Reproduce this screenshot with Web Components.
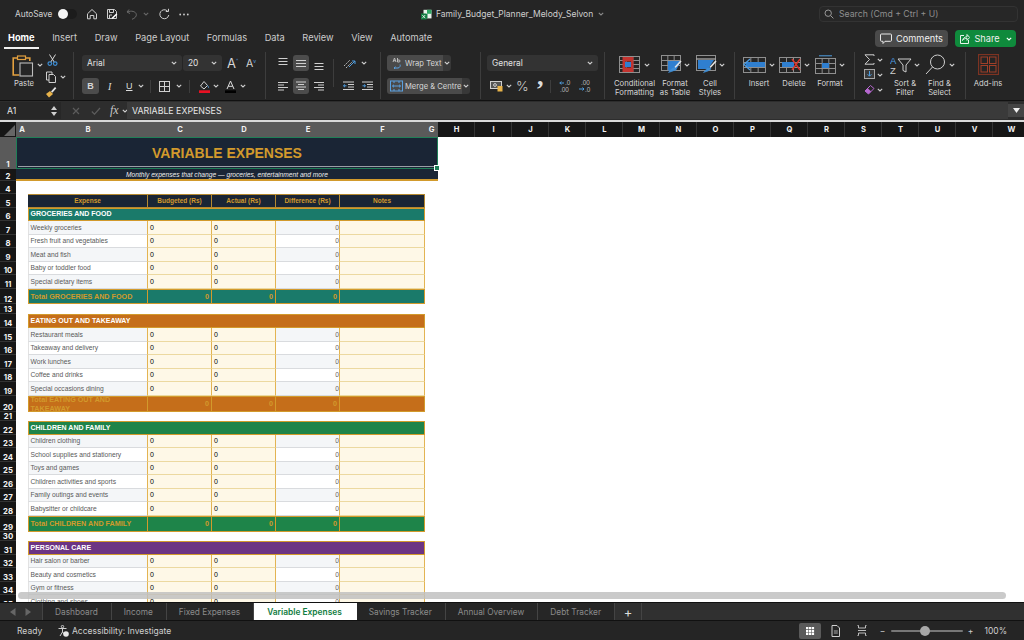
<!DOCTYPE html>
<html>
<head>
<meta charset="utf-8">
<title>Family Budget Planner</title>
<style>
  html, body { margin: 0; padding: 0; height: 100%; overflow: hidden; background: #262626; }
  body { display: flex; flex-direction: column; width: 1024px; height: 640px; font-family: Inter, "Liberation Sans", sans-serif; }
</style>
</head>
<body>
<budget-titlebar></budget-titlebar>
<budget-menubar></budget-menubar>
<budget-ribbon></budget-ribbon>
<budget-formula></budget-formula>
<budget-sheet></budget-sheet>
<budget-tabs></budget-tabs>
<budget-status></budget-status>

<script>
// small svg helper, everything is drawn on a px-for-px viewBox
const svg = (w, h, inner, extra = '') =>
  `<svg width="${w}" height="${h}" viewBox="0 0 ${w} ${h}" fill="none" stroke="#cfcfcf" stroke-width="1" style="display:block;flex:none;${extra}">${inner}</svg>`;
const chev = (ml = 3, c = '#d0d0d0') =>
  svg(6, 4, `<path d="M.8 .8 3 3 5.2 .8" stroke="${c}" stroke-width="1.1"/>`, `margin-left:${ml}px;`);

class BudgetTitlebar extends HTMLElement {
  constructor() {
    super();
    this.attachShadow({ mode: 'open' });
    this.shadowRoot.innerHTML = `
      <style>
        :host { display: flex; align-items: center; height: 26px; flex: none; background: #252525; color: #d2d2d2; font-size: 8.3px; padding-top: 2px; box-sizing: border-box; position: relative; }
        .auto { margin-left: 15px; width: 43px; }
        .toggle { width: 19px; height: 10px; border-radius: 5px; background: #1c1c1c; position: relative; margin-right: 9px; }
        .toggle i { position: absolute; left: 0; top: 0; width: 10px; height: 10px; border-radius: 50%; background: #f4f4f4; }
        .icons { display: flex; align-items: center; gap: 8px; }
        .name { display: flex; align-items: center; gap: 4px; margin-left: 232px; font-size: 8.5px; width: 398px; color: #cfcfcf; }
        .search { display: flex; align-items: center; gap: 5px; width: 199px; height: 16px; box-sizing: border-box; border: 1px solid #333; border-radius: 4px; padding-left: 4px; color: #8f8f8f; font-size: 8.7px; background: #272727; }
      </style>
      <div class="auto">AutoSave</div>
      <div class="toggle"><i></i></div>
      <div class="icons">
        ${svg(12, 12, '<path d="M1.5 5.8 6 1.5l4.5 4.3v5H7.8V7.5H4.2v3.3H1.5z" stroke-linejoin="round"/>')}
        ${svg(12, 12, '<path d="M1.5 1.5h7l2 2v7h-9z" stroke-linejoin="round"/><path d="M3.5 1.5v3h4v-3M3.5 10.5V7h2.5"/><path d="M6 10.5 10.8 6" stroke="#fff" stroke-width="1.6"/>')}
        ${svg(12, 12, '<path d="M3 1.5 1 4l3 1.5M1.3 4c4-1.8 8.5-.5 9 2.3.4 2.2-1.6 4-4.3 5" stroke="#6a6a6a"/>', 'margin-right:-3px')}
        ${chev(0, '#666')}
        ${svg(12, 12, '<path d="M9.5 3A4.5 4.5 0 1 0 10.8 7"/><path d="M10.5 .8V3.5H7.8" />', 'margin-left:1px')}
        ${svg(10, 3, '<circle cx="1.2" cy="1.5" r=".9" fill="#cfcfcf" stroke="none"/><circle cx="5" cy="1.5" r=".9" fill="#cfcfcf" stroke="none"/><circle cx="8.8" cy="1.5" r=".9" fill="#cfcfcf" stroke="none"/>', 'margin-left:1px')}
      </div>
      <div class="name">
        ${svg(11, 11, '<rect x="2.5" y=".8" width="8" height="8.6" fill="#e8f3ec" stroke="none"/><rect x="6" y=".8" width="4.5" height="4" fill="#2fa866" stroke="none"/><rect x="2.5" y="5" width="4" height="4.4" fill="#1f7a4c" stroke="none"/><rect x="0" y="4.5" width="5.6" height="6" fill="#107c41" stroke="none"/><path d="M1.3 6 4.2 9.2M4.2 6 1.3 9.2" stroke="#fff" stroke-width=".8"/>')}
        <span>Family_Budget_Planner_Melody_Selvon</span>
        ${chev(1, '#8a8a8a')}
      </div>
      <div class="search">
        ${svg(10, 10, '<circle cx="4.2" cy="4.2" r="3.2" stroke="#999"/><path d="M6.6 6.6 9.4 9.4" stroke="#999"/>')}
        <span>Search (Cmd + Ctrl + U)</span>
      </div>`;
  }
}

class BudgetMenubar extends HTMLElement {
  constructor() {
    super();
    this.attachShadow({ mode: 'open' });
    const names = ['Home', 'Insert', 'Draw', 'Page Layout', 'Formulas', 'Data', 'Review', 'View', 'Automate'];
    this.shadowRoot.innerHTML = `
      <style>
        :host { display: flex; align-items: center; height: 22px; flex: none; background: #252525; color: #cdcdcd; font-size: 9.25px; box-sizing: border-box; padding-left: 8px; }
        .tab { position: relative; margin-right: 17.6px; white-space: nowrap; }
        .tab.on { color: #fff; font-weight: 700; }
        .tab.on::after { content: ""; position: absolute; left: -4px; right: -4px; bottom: -6px; height: 1.5px; background: #f0f0f0; }
        .end { margin-left: auto; display: flex; gap: 7px; margin-right: 8px; margin-top: 3px; }
        .btn { display: flex; align-items: center; justify-content: center; gap: 4px; height: 17px; border-radius: 4px; color: #f0f0f0; font-size: 9.2px; }
        .comments { width: 73px; background: #4a4a4a; }
        .share { width: 61px; background: #0f8a3c; }
      </style>
      ${names.map((n, i) => `<div class="tab ${i ? '' : 'on'}">${n}</div>`).join('')}
      <div class="end">
        <div class="btn comments">${svg(12, 11, '<path d="M1.5 1h9a1 1 0 0 1 1 1v5.3a1 1 0 0 1-1 1H5L3 10.5V8.3H1.5a1 1 0 0 1-1-1V2a1 1 0 0 1 1-1z" stroke="#e8e8e8"/>')}Comments</div>
        <div class="btn share">${svg(11, 11, '<path d="M5 2.5H1.5v8h8V7" stroke="#e8f5ec"/><path d="M3.5 7.5C4 5 6 3.8 8 3.8V1.5l2.7 3L8 7.3V5.3C6 5.3 4.8 6 3.5 7.5z" stroke="#e8f5ec"/>')}Share${chev(2, '#fff')}</div>
      </div>`;
  }
}

// one big ribbon command: icon + chevron above, one or two label lines below
class RibbonBig extends HTMLElement {
  constructor() {
    super();
    this.attachShadow({ mode: 'open' });
    this.shadowRoot.innerHTML = `
      <style>
        :host { display: flex; flex-direction: column; align-items: center; height: 47px; color: #d6d6d6; font-size: 7.7px; line-height: 9px; text-align: center; white-space: nowrap; }
        .top { height: 25px; display: flex; align-items: center; }
        .lab { margin-top: 2px; }
      </style>
      <div class="top"><slot name="icon"></slot></div>
      <div class="lab"><slot></slot></div>`;
  }
}

class BudgetRibbon extends HTMLElement {
  constructor() {
    super();
    this.attachShadow({ mode: 'open' });
    const G = '#8f8f8f';
    const grid = (x, y, w, h, cols, rows) => {
      let s = `<rect x="${x}" y="${y}" width="${w}" height="${h}" stroke="${G}"/>`;
      for (let i = 1; i < cols; i++) s += `<path d="M${x + i * w / cols} ${y}v${h}" stroke="${G}"/>`;
      for (let i = 1; i < rows; i++) s += `<path d="M${x} ${y + i * h / rows}h${w}" stroke="${G}"/>`;
      return s;
    };
    const brush = (tx, ty) => `<path d="M${tx} ${ty}l-6 6.5" stroke="#e6e6e6" stroke-width="1.6"/><path d="M${tx - 6} ${ty + 6.5}l-3 1-3.5 4 4.5-1.5 3-2z" fill="#3f8fd6" stroke="#3f8fd6" stroke-width=".6"/>`;
    const lines = (arr) => arr.map(([x, y, w]) => `<path d="M${x} ${y}h${w}"/>`).join('');
    this.shadowRoot.innerHTML = `
      <style>
        :host { display: flex; height: 53px; flex: none; background: #252525; color: #d6d6d6; font-size: 7.6px; box-sizing: border-box; padding-top: 4px; border-bottom: 1px solid #111; }
        .g { display: flex; height: 47px; box-sizing: border-box; border-right: 1px solid #3d3d3d; flex: none; }
        .col { display: flex; flex-direction: column; justify-content: space-between; padding: 3px 0 0; height: 39px; }
        .row { display: flex; align-items: center; height: 16px; }
        .sel { display: flex; align-items: center; justify-content: space-between; height: 16px; box-sizing: border-box; background: #333; border-radius: 3px; padding: 0 5px; color: #e2e2e2; font-size: 8.4px; }
        .hi { background: #4c4c4c; border-radius: 3px; display: flex; align-items: center; justify-content: center; height: 16px; }
        .split { display: flex; height: 16px; }
        .split .main { display: flex; align-items: center; background: #4a4a4a; border-radius: 3px 0 0 3px; white-space: nowrap; }
        .split .more { display: flex; align-items: center; justify-content: center; width: 8px; background: #383838; border-radius: 0 3px 3px 0; }
        .sep { width: 1px; height: 13px; background: #3d3d3d; flex: none; }
        .lbl { font-size: 7.7px; color: #d6d6d6; }
        .b { font-family: "Liberation Serif", serif; font-size: 10px; color: #ddd; }
      </style>

      <div class="g" style="width:74px;padding-left:12px">
        <div style="width:25px">
          ${svg(23, 23, '<path d="M6 3H1.2v17h6M13 3h4.8v3" stroke="#e2a03f" stroke-width="1.6"/><rect x="5.5" y="1" width="8" height="3.5" stroke="#e2a03f" stroke-width="1.2"/><rect x="8" y="8" width="12.5" height="13" stroke="#bdbdbd" stroke-width="1.1"/>', 'margin-top:3px')}
          <div class="lbl" style="margin:1px 0 0 0;width:24px;text-align:center">Paste</div>
        </div>
        <div style="margin-top:11px">${chev(0)}</div>
        <div style="display:flex;flex-direction:column;gap:3px;margin-left:2px;padding-top:2px">
          ${svg(11, 12, '<path d="M2.5 .5 7.2 8M8.5 .5 3.8 8" stroke="#d8d8d8"/><circle cx="2.8" cy="9.6" r="1.8" stroke="#3f8fd6" stroke-width="1.2"/><circle cx="8.2" cy="9.6" r="1.8" stroke="#3f8fd6" stroke-width="1.2"/>', 'margin-left:2px')}
          <div style="display:flex;align-items:center;margin-top:2px">${svg(12, 12, '<path d="M7 3V1H1.5v8H4" stroke="#cfcfcf"/><path d="M4 3.5h4.5l2 2v6H4z" stroke="#cfcfcf"/>')}${chev(3)}</div>
          ${svg(12, 12, '<path d="M6 5.5 10 1l1.3 1.2-4 4.5z" fill="#e6e6e6" stroke="none"/><path d="M5 5 1 8l3 3.5L8 8z" fill="#e8b34a" stroke="none"/>')}
        </div>
      </div>

      <div class="g" style="width:192px;padding-left:8px">
        <div class="col">
          <div class="row">
            <div class="sel" style="width:100px;margin-right:1px">Arial${chev(0)}</div>
            <div class="sel" style="width:39px">20${chev(0)}</div>
            <span style="font-size:13px;margin-left:5px;width:19px">A<sup style="font-size:5px;color:#5aa0e0;vertical-align:6px">^</sup></span>
            <span style="font-size:10.5px;width:14px">A<sup style="font-size:5px;color:#5aa0e0;vertical-align:4px">v</sup></span>
          </div>
          <div class="row">
            <div class="hi" style="width:17px;font-weight:700;font-family:'Liberation Sans',sans-serif;font-size:9px">B</div>
            <span class="b" style="font-style:italic;margin-left:9px;width:10px">I</span>
            <span class="b" style="text-decoration:underline;margin-left:8px;font-family:'Liberation Sans',sans-serif;font-size:9px">U</span>
            ${chev(5)}
            <div class="sep" style="margin:0 8px 0 6px"></div>
            ${svg(11, 11, '<rect x=".5" y=".5" width="10" height="10"/><path d="M5.5 .5v10M.5 5.5h10"/>')}
            ${chev(6)}
            <div class="sep" style="margin:0 9px 0 7px"></div>
            ${svg(11, 13, '<path d="M5 1.5 1.5 6l3.5 3 3.5-3.5z"/><path d="M8.5 5.5c1 1.2 1.3 2 .8 2.4" stroke="#5aa0e0"/><rect x="0" y="10.3" width="11" height="2.7" fill="#e81123" stroke="none"/>')}
            ${chev(3)}
            ${svg(11, 13, '<path d="M2 9 5.5 1 9 9M3.3 6.3h4.4" stroke="#ddd"/><rect x="0" y="10.3" width="11" height="2.7" fill="#000" stroke="none"/>', 'margin-left:6px')}
            ${chev(4)}
          </div>
        </div>
      </div>

      <div class="g" style="width:115px;padding-left:11px">
        <div class="col" style="width:49px">
          <div class="row" style="gap:4px">
            ${svg(12, 12, lines([[1.5, 2.5, 9], [1.5, 5.5, 9], [1.5, 8.5, 9]]), 'margin-top:-3px')}
            <div class="hi" style="width:16px">${svg(12, 9, lines([[1, 1.5, 10], [1, 4.5, 10], [1, 7.5, 10]]))}</div>
            ${svg(12, 12, lines([[1.5, 4.5, 9], [1.5, 7.5, 9], [1.5, 10.5, 9]]), 'margin-top:3px')}
          </div>
          <div class="row" style="gap:4px">
            ${svg(12, 12, lines([[1, 2.5, 10], [1, 5, 6], [1, 7.5, 10], [1, 10, 6]]))}
            <div class="hi" style="width:16px">${svg(12, 10, lines([[1, 1, 10], [3, 3.5, 6], [1, 6, 10], [3, 8.5, 6]]))}</div>
            ${svg(12, 12, lines([[1, 2.5, 10], [5, 5, 6], [1, 7.5, 10], [5, 10, 6]]))}
          </div>
        </div>
        <div class="sep" style="height:28px;margin:7px 9px 0 7px"></div>
        <div class="col">
          <div class="row">
            ${svg(13, 11, '<path d="M1 8 7 2M3 10l6-6" stroke="#b9b9b9" stroke-dasharray="2 1"/><path d="M6 9 12 3M12 3v3M12 3H9" stroke="#4e9de0"/>')}
            ${chev(5)}
          </div>
          <div class="row">
            ${svg(11, 10, lines([[0, 1, 11], [5, 3.5, 6], [5, 6, 6], [0, 8.5, 11]]) + '<path d="M3.5 4.8H.5M.5 4.8 2 3.4M.5 4.8 2 6.2" stroke="#4e9de0"/>')}
            ${svg(11, 10, lines([[0, 1, 11], [5, 3.5, 6], [5, 6, 6], [0, 8.5, 11]]) + '<path d="M.5 4.8h3M3.5 4.8 2 3.4M3.5 4.8 2 6.2" stroke="#4e9de0"/>', 'margin-left:8px')}
          </div>
        </div>
      </div>

      <div class="g" style="width:100px;padding-left:6px">
        <div class="col">
          <div class="split">
            <div class="main" style="width:56px">
              ${svg(13, 12, '<path d="M3 5 4.5 1l1.5 4M3.5 3.7h2" stroke="#bbb"/><path d="M7.5 1v4h1.5a1 1 0 0 0 0-2H7.5" stroke="#bbb"/><path d="M10 7.5a2.5 2.5 0 0 1-2 3.5H4M4 11l1.5-1.3M4 11l1.5 1.3" stroke="#5aa0e0"/>', 'margin-left:3px')}
              <span style="margin-left:2px">Wrap Text</span>
            </div>
            <div class="more">${chev(0)}</div>
          </div>
          <div class="split">
            <div class="main" style="width:75px">
              ${svg(13, 12, '<rect x=".5" y="1" width="12" height="10" stroke="#5aa0e0"/><path d="M4 1v2M4 9v2M9 1v2M9 9v2" stroke="#5aa0e0"/><path d="M2.5 6h8M2.5 6 4 4.7M2.5 6 4 7.3M10.5 6 9 4.7M10.5 6 9 7.3" stroke="#5aa0e0"/>', 'margin-left:3px')}
              <span style="margin-left:2px">Merge &amp; Centre</span>
            </div>
            <div class="more">${chev(0)}</div>
          </div>
        </div>
      </div>

      <div class="g" style="width:124px;padding-left:6px">
        <div class="col">
          <div class="sel" style="width:111px">General${chev(0)}</div>
          <div class="row" style="padding-left:3px">
            ${svg(13, 11, '<rect x=".5" y=".5" width="11" height="7" fill="#555" /><circle cx="5" cy="4" r="1.4"/><rect x="7.5" y="5" width="5" height="5.5" fill="#e8b34a" stroke="none"/>')}
            ${chev(3)}
            <span style="font-size:13.5px;margin-left:4px;width:16px;color:#ccc;font-weight:300">%</span>
            <span style="font-family:'Liberation Serif',serif;font-size:26px;margin-left:5px;width:11px;line-height:10px;height:10px;color:#ddd;font-weight:700;transform:translateY(-9px)">,</span>
            <div class="sep" style="margin:0 8px 0 2px"></div>
            ${svg(13, 12, '<path d="M5 3H0.8M.8 3 2.3 1.5M.8 3l1.5 1.5" stroke="#4e9de0"/><text x="6" y="5" font-size="6.4" fill="#bbb" stroke="none" font-family="Liberation Sans">.0</text><text x="1" y="11.5" font-size="6.4" fill="#bbb" stroke="none" font-family="Liberation Sans">.00</text>')}
            ${svg(13, 12, '<text x="3" y="5" font-size="6.4" fill="#bbb" stroke="none" font-family="Liberation Sans">.00</text><path d="M1 9h5M6 9 4.5 7.5M6 9l-1.5 1.5" stroke="#4e9de0"/><text x="7" y="11.5" font-size="6.4" fill="#bbb" stroke="none" font-family="Liberation Sans">.0</text>', 'margin-left:6px')}
          </div>
        </div>
      </div>

      <div class="g" style="width:130px;padding-left:8px">
        <ribbon-big style="width:43px">
          <div slot="icon" style="display:flex;align-items:center">${svg(21, 17, grid(.5, .5, 20, 16, 3, 4) + '<path d="M3.5 1h11v4.5h-11zM3.5 11.5h11V16h-11zM3.5 5.5H6v6H3.5zM12 5.5h2.5v6H12z" fill="#c2332f" stroke="none"/><rect x="6" y="6" width="6" height="5" fill="#2f7fd0" stroke="none"/>')}${chev(4)}</div>
          Conditional<br>Formatting
        </ribbon-big>
        <ribbon-big style="width:38px;margin-left:0">
          <div slot="icon" style="display:flex;align-items:center">${svg(21, 20, grid(.5, .5, 19, 15, 3, 3) + '<path d="M7 6h13L15 15.5H7z" fill="#2f7fd0" stroke="none"/>' + brush(20, 6))}${chev(2)}</div>
          Format<br>as Table
        </ribbon-big>
        <ribbon-big style="width:34px;margin-left:-1px">
          <div slot="icon" style="display:flex;align-items:center">${svg(21, 20, grid(.5, .5, 19, 15, 1, 1) + '<path d="M.5 4h19" stroke="${G}"/><path d="M2 5h16l-6 9H2z" fill="#2f7fd0" stroke="none"/>' + brush(20, 6))}${chev(2)}</div>
          Cell<br>Styles
        </ribbon-big>
      </div>

      <div class="g" style="width:120px;padding-left:8px">
        <ribbon-big style="width:32px;margin-left:0">
          <div slot="icon" style="display:flex;align-items:center">${svg(23, 16, grid(.5, .5, 22, 15, 3, 3) + '<rect x="3" y="5" width="19" height="5" fill="#2f7fd0" stroke="none"/><path d="M7 2 1 7.5 7 13" stroke="#4e9de0" stroke-width="1.3"/>')}${chev(3)}</div>
          Insert
        </ribbon-big>
        <ribbon-big style="width:36px;margin-left:1px">
          <div slot="icon" style="display:flex;align-items:center">${svg(22, 16, grid(.5, .5, 21, 15, 3, 3) + '<rect x="3" y="5" width="12" height="5" fill="#2f7fd0" stroke="none"/><path d="M13 2 21 13M21 2 13 13" stroke="#d9342b" stroke-width="1.4"/>')}${chev(3)}</div>
          Delete
        </ribbon-big>
        <ribbon-big style="width:34px;margin-left:1px">
          <div slot="icon" style="display:flex;align-items:center">${svg(21, 19, '<path d="M4 .8h13" stroke="#4e9de0"/>' + grid(.5, 3.5, 20, 15, 3, 3) + '<rect x="7" y="8" width="7" height="5" fill="#2f7fd0" stroke="none"/>')}${chev(3)}</div>
          Format
        </ribbon-big>
      </div>

      <div class="g" style="width:111px;padding-left:9px">
        <div style="display:flex;flex-direction:column;gap:4px;padding-top:2px;width:22px">
          <div style="display:flex;align-items:center">${svg(11, 11, '<path d="M10 2V.8H1l4.5 4.7L1 10.2h9V9"/>')}${chev(2)}</div>
          <div style="display:flex;align-items:center">${svg(11, 11, '<rect x=".5" y=".5" width="10" height="9" fill="#3a3a3a" stroke="#a8a8a8"/><path d="M5.5 2v5M3.5 5.2l2 2 2-2" stroke="#4e9de0"/>')}${chev(2)}</div>
          <div style="display:flex;align-items:center">${svg(11, 11, '<path d="M1 7 6.5 1.5 10 4.5 4.5 10z" stroke="#b768d0"/><path d="M3.8 4.3 7.2 7.6 4.5 10 1 7z" fill="#b768d0" stroke="none"/>')}${chev(2)}</div>
        </div>
        <ribbon-big style="width:36px;margin-left:1px">
          <div slot="icon" style="display:flex;align-items:center">${svg(22, 20, '<text x="0" y="9" font-size="9.5" fill="#4e9de0" stroke="none" font-family="Liberation Sans">A</text><text x="0" y="19" font-size="9.5" fill="#cfcfcf" stroke="none" font-family="Liberation Sans">Z</text><path d="M8 4h13l-5 6v7l-3-1.5V10z"/>')}${chev(2)}</div>
          Sort &amp;<br>Filter
        </ribbon-big>
        <ribbon-big style="width:33px;margin-left:0">
          <div slot="icon" style="display:flex;align-items:center">${svg(21, 21, '<circle cx="12.5" cy="8" r="7"/><path d="M7.5 13 1 20"/>')}${chev(3)}</div>
          Find &amp;<br>Select
        </ribbon-big>
      </div>

      <div style="width:44px;margin-left:0;padding-left:2px">
        <ribbon-big style="width:40px">
          <div slot="icon">${svg(21, 21, '<rect x=".5" y=".5" width="20" height="20" stroke="#7d3322" stroke-width="1.3"/><rect x="3" y="3" width="6.5" height="6.5" stroke="#a03f28"/><rect x="11.5" y="3" width="6.5" height="6.5" stroke="#a03f28"/><rect x="3" y="11.5" width="6.5" height="6.5" stroke="#a03f28"/><rect x="11.5" y="11.5" width="6.5" height="6.5" stroke="#a03f28"/>')}</div>
          Add-ins
        </ribbon-big>
      </div>`;
  }
}

class BudgetFormula extends HTMLElement {
  constructor() {
    super();
    this.attachShadow({ mode: 'open' });
    this.shadowRoot.innerHTML = `
      <style>
        :host { display: flex; align-items: center; height: 21px; flex: none; box-sizing: border-box; background: #2d2d2d; color: #e6e6e6; font-size: 8.7px; border-bottom: 2px solid #d9d9d9; }
        .name { width: 61px; height: 17px; display: flex; align-items: center; justify-content: space-between; background: #272727; box-sizing: border-box; padding: 0 4px 0 7px; flex: none; }
        .steps { display: flex; flex-direction: column; gap: 2px; }
        .act { display: flex; align-items: center; width: 67px; flex: none; padding-left: 11px; box-sizing: border-box; }
        .fx { font-family: "Liberation Serif", serif; font-style: italic; font-size: 12px; color: #c8c8c8; margin-left: 9px; }
        .input { flex: 1; height: 17px; background: #3a3a3a; display: flex; align-items: center; padding-left: 5px; font-size: 8.8px; margin-left: -1px; }
        .drop { width: 16px; height: 13px; background: #454545; display: flex; align-items: center; justify-content: center; flex: none; }
      </style>
      <div class="name">A1<div class="steps">
        ${svg(6, 4, '<path d="M3 0 6 4H0z" fill="#d0d0d0" stroke="none"/>')}
        ${svg(6, 4, '<path d="M3 4 6 0H0z" fill="#d0d0d0" stroke="none"/>')}
      </div></div>
      <div class="act">
        ${svg(8, 8, '<path d="M1 1l6 6M7 1 1 7" stroke="#5c5c5c" stroke-width="1.2"/>')}
        ${svg(10, 8, '<path d="M.8 4.5 3.5 7.2 9 1" stroke="#5c5c5c" stroke-width="1.2"/>', 'margin-left:11px')}
        <span class="fx">fx</span>${chev(3)}
      </div>
      <div class="input">VARIABLE EXPENSES</div>
      <div class="drop">${svg(7, 5, '<path d="M0 0h7L3.5 5z" fill="#f0f0f0" stroke="none"/>')}</div>`;
  }
}

const GOLD = '#d29a2c';
const SECTIONS = [
  { title: 'GROCERIES AND FOOD', color: '#1a7a6a', items: ['Weekly groceries', 'Fresh fruit and vegetables', 'Meat and fish', 'Baby or toddler food', 'Special dietary items'] },
  { title: 'EATING OUT AND TAKEAWAY', color: '#c56e1a', items: ['Restaurant meals', 'Takeaway and delivery', 'Work lunches', 'Coffee and drinks', 'Special occasions dining'] },
  { title: 'CHILDREN AND FAMILY', color: '#1e8449', items: ['Children clothing', 'School supplies and stationery', 'Toys and games', 'Children activities and sports', 'Family outings and events', 'Babysitter or childcare'] },
  { title: 'PERSONAL CARE', color: '#6c3483', items: ['Hair salon or barber', 'Beauty and cosmetics', 'Gym or fitness', 'Clothing and shoes'] },
];

class BudgetSheet extends HTMLElement {
  constructor() {
    super();
    this.attachShadow({ mode: 'open' });
    const rows = [];   // row number + height
    const cells = [];
    const add = (n, h) => { rows.push({ n, h }); return rows.length + 1; };
    const cell = (r, c, span, cls, text = '', style = '') =>
      cells.push(`<div class="c ${cls}" style="grid-row:${r};grid-column:${c}/span ${span};${style}">${text}</div>`);

    let r = add(1, 32);
    cell(r, 2, 7, 'title', 'VARIABLE EXPENSES<i class="handle"></i>');
    r = add(2, 12);
    cell(r, 2, 7, 'sub', 'Monthly expenses that change — groceries, entertainment and more');
    add(4, 12.5);
    r = add(5, 14);
    ['Expense', 'Budgeted (Rs)', 'Actual (Rs)', 'Difference (Rs)', 'Notes'].forEach((t, i) => cell(r, 3 + i, 1, 'head', t));

    let n = 6;
    const heads = [13.5, 14.5, 14, 14];
    const totals = [15.5, 16, 16];
    const gaps = [9.5, 9, 9];
    SECTIONS.forEach((s, si) => {
      r = add(n++, heads[si]);
      cell(r, 3, 5, 'section', s.title, `background:${s.color}`);
      s.items.forEach((item, i) => {
        r = add(n++, 13.5);
        const zebra = i % 2 ? '#fff' : '#f4f6f8';
        cell(r, 3, 1, 'label', item, `background:${zebra}`);
        cell(r, 4, 1, 'input', '0');
        cell(r, 5, 1, 'input', '0');
        cell(r, 6, 1, 'diff', '0', `background:${zebra}`);
        cell(r, 7, 1, 'input');
      });
      if (totals[si]) {
        r = add(n++, totals[si]);
        cell(r, 3, 1, 'total first', `Total ${s.title}`, `background:${s.color}`);
        [4, 5, 6].forEach(c => cell(r, c, 1, 'total num', '0', `background:${s.color}`));
        cell(r, 7, 1, 'total', '', `background:${s.color}`);
        add(n++, gaps[si]);
      }
    });

    const letters = 'ABCDEFGHIJKLMNOPQRSTUVW'.split('');
    const colHeads = letters.map((l, i) =>
      `<div class="ch ${i < 7 ? 'on' : ''}" style="grid-row:1;grid-column:${i + 2}">${l}</div>`).join('');
    const rowHeads = rows.map((row, i) =>
      `<div class="rh ${i === 0 ? 'on' : ''}" style="grid-row:${i + 2};grid-column:1">${row.n}</div>`).join('');

    this.shadowRoot.innerHTML = `
      <style>
        :host { display: block; flex: 1; min-height: 0; position: relative; overflow: hidden; background: #fff; font-family: "Liberation Sans", Arial, sans-serif; }
        .grid { display: grid; grid-template-columns: 16px 12px 120px 64px 64px 64px 85px 13px repeat(16, 37px);
                grid-template-rows: 15px ${rows.map(x => x.h + 'px').join(' ')}; align-content: start; }
        .ch { background: #161616; color: #f2f2f2; font-size: 7.6px; font-weight: 700; display: flex; align-items: center; justify-content: center; font-family: Inter, sans-serif; box-shadow: inset -1px 0 #333; }
        .ch.on { background: #5a5a5a; box-shadow: none; }
        .rh { background: #161616; color: #f4f4f4; font-size: 7.8px; font-weight: 700; display: flex; align-items: flex-end; justify-content: center; font-family: Inter, sans-serif; box-shadow: inset 0 -1px #333; line-height: 10px; overflow: hidden; }
        .rh.on { background: #5a5a5a; box-shadow: none; }
        .corner { grid-row: 1; grid-column: 1; background: #161616; position: relative; }
        .corner::after { content: ""; position: absolute; right: 1px; bottom: 1px; border-style: solid; border-width: 0 0 11px 11px; border-color: transparent transparent #666 transparent; }
        .c { box-sizing: border-box; min-width: 0; overflow: hidden; white-space: nowrap; display: flex; align-items: center; font-size: 6.7px; color: #595959; }
        .title { background: #1a2535; color: ${GOLD}; font-size: 14px; font-weight: 700; justify-content: center; overflow: visible; position: relative; outline: 1.5px solid #1f7f57; outline-offset: -1px; box-shadow: inset 0 0 0 2px #1a2535, inset 0 -3px #9aa0a6; }
        .handle { position: absolute; right: -2px; bottom: -2px; width: 4px; height: 4px; background: #1f7f57; border: .5px solid #fff; }
        .sub { background: #1a2535; color: #ececec; font-size: 6.65px; font-style: italic; justify-content: center; border-bottom: 2px solid ${GOLD}; }
        .head { background: #1a2535; color: ${GOLD}; font-size: 6.5px; font-weight: 700; justify-content: center; border: 1px solid #b5892f; border-width: 1px 1px 1px 0; }
        .section { color: #fff; font-size: 7px; font-weight: 700; padding: 0 0 1px 1.5px; border: 1.5px solid ${GOLD}; }
        .label { padding-left: 1.5px; border-bottom: 1px solid #d9dbde; border-left: 1px solid #e2e2e2; }
        .input { background: #fef8e7; color: #000; font-size: 7px; padding-left: 2px; border-bottom: 1px solid #ecd9a0; border-right: 1px solid #e3b452; border-left: 1px solid #e3b452; margin-left: -1px; }
        .diff { justify-content: flex-end; padding-right: 1px; border-bottom: 1px solid #d9dbde; color: #666; }
        .total { border-top: 1.5px solid ${GOLD}; border-bottom: 1.5px solid ${GOLD}; border-right: 1px solid ${GOLD}; color: ${GOLD}; font-weight: 700; font-size: 7.2px; white-space: normal; line-height: 9px; }
        .first { border-left: 1.5px solid ${GOLD}; padding-left: 1.5px; }
        .num { justify-content: flex-end; padding-right: 2px; }
        .bar { position: absolute; left: 18px; width: 988px; bottom: 3px; height: 7px; border-radius: 4px; background: rgba(190, 190, 190, .82); }
      </style>
      <div class="grid">
        <div class="corner"></div>
        ${colHeads}
        ${rowHeads}
        ${cells.join('')}
      </div>
      <div class="bar"></div>`;
  }
}

class BudgetTabs extends HTMLElement {
  constructor() {
    super();
    this.attachShadow({ mode: 'open' });
    const tabs = ['Dashboard', 'Income', 'Fixed Expenses', 'Variable Expenses', 'Savings Tracker', 'Annual Overview', 'Debt Tracker'];
    this.shadowRoot.innerHTML = `
      <style>
        :host { display: flex; align-items: stretch; height: 18px; flex: none; background: #303030; color: #8b8b8b; font-size: 8.3px; border-top: 1px solid #111; box-sizing: border-box; }
        .nav { width: 43px; display: flex; align-items: center; gap: 9px; padding-left: 10px; box-sizing: border-box; border-right: 1px solid #444; }
        .t { display: flex; align-items: center; padding: 0 13px 0 12px; background: #262626; border-right: 1px solid #444; white-space: nowrap; }
        .t.on { background: #fff; color: #107c41; font-weight: 600; font-size: 8.4px; padding: 0 15px 0 13px; border-right: none; margin-bottom: -1px; }
        .plus { width: 26px; display: flex; align-items: center; justify-content: center; border-right: 1px solid #444; color: #ddd; font-size: 13px; }
      </style>
      <div class="nav">
        ${svg(6, 8, '<path d="M5.5 0v8L0 4z" fill="#666" stroke="none"/>')}
        ${svg(6, 8, '<path d="M.5 0v8L6 4z" fill="#666" stroke="none"/>')}
      </div>
      ${tabs.map(t => `<div class="t ${t === 'Variable Expenses' ? 'on' : ''}">${t}</div>`).join('')}
      <div class="plus">+</div>`;
  }
}

class BudgetStatus extends HTMLElement {
  constructor() {
    super();
    this.attachShadow({ mode: 'open' });
    this.shadowRoot.innerHTML = `
      <style>
        :host { display: flex; align-items: center; height: 20px; flex: none; background: #252525; color: #cfcfcf; font-size: 8.5px; box-sizing: border-box; border-top: 1px solid #111; }
        .ready { margin-left: 17px; width: 41px; }
        .acc { display: flex; align-items: center; gap: 3px; }
        .right { margin-left: auto; display: flex; align-items: center; margin-right: 17px; }
        .view { width: 22px; height: 16px; display: flex; align-items: center; justify-content: center; border-radius: 2px; }
        .view.on { background: #5a5a5a; }
        .slider { width: 72px; height: 2px; background: #777; border-radius: 1px; position: relative; margin: 0 4px; }
        .slider i { position: absolute; left: 29px; top: -4px; width: 10px; height: 10px; border-radius: 50%; background: #a8a8a8; }
      </style>
      <div class="ready">Ready</div>
      <div class="acc">
        ${svg(11, 12, '<circle cx="4.5" cy="1.6" r="1.2"/><path d="M.5 3.5h8M4.5 3.5V7L2 11M4.5 7 7 10"/><circle cx="8" cy="9" r="2.8" fill="#e8e8e8" stroke="none"/>')}
        <span>Accessibility: Investigate</span>
      </div>
      <div class="right">
        <div class="view on">${svg(10, 10, '<path d="M1 1h2.3v2.3H1zM3.9 1h2.3v2.3H3.9zM6.8 1h2.3v2.3H6.8zM1 3.9h2.3v2.3H1zM3.9 3.9h2.3v2.3H3.9zM6.8 3.9h2.3v2.3H6.8zM1 6.8h2.3v2.3H1zM3.9 6.8h2.3v2.3H3.9zM6.8 6.8h2.3v2.3H6.8z" fill="#fff" stroke="none"/>')}</div>
        ${svg(9, 12, '<path d="M1 .5h5l2.5 2.5v8.5H1z"/><path d="M2.8 6h4M2.8 8h4" stroke-width=".8"/>', 'margin-left:10px')}
        ${svg(10, 11, '<path d="M.5 .5h1v2.5h7V.5h1M.5 10.5h1V8h7v2.5h1M1 5.5h8" stroke-width=".9"/>', 'margin-left:17px')}
        <span style="margin-left:13px;width:7px">−</span>
        <div class="slider"><i></i></div>
        <span style="margin-left:1px">+</span>
        <span style="margin-left:11px">100%</span>
      </div>`;
  }
}

customElements.define('budget-titlebar', BudgetTitlebar);
customElements.define('budget-menubar', BudgetMenubar);
customElements.define('ribbon-big', RibbonBig);
customElements.define('budget-ribbon', BudgetRibbon);
customElements.define('budget-formula', BudgetFormula);
customElements.define('budget-sheet', BudgetSheet);
customElements.define('budget-tabs', BudgetTabs);
customElements.define('budget-status', BudgetStatus);
</script>
</body>
</html>
